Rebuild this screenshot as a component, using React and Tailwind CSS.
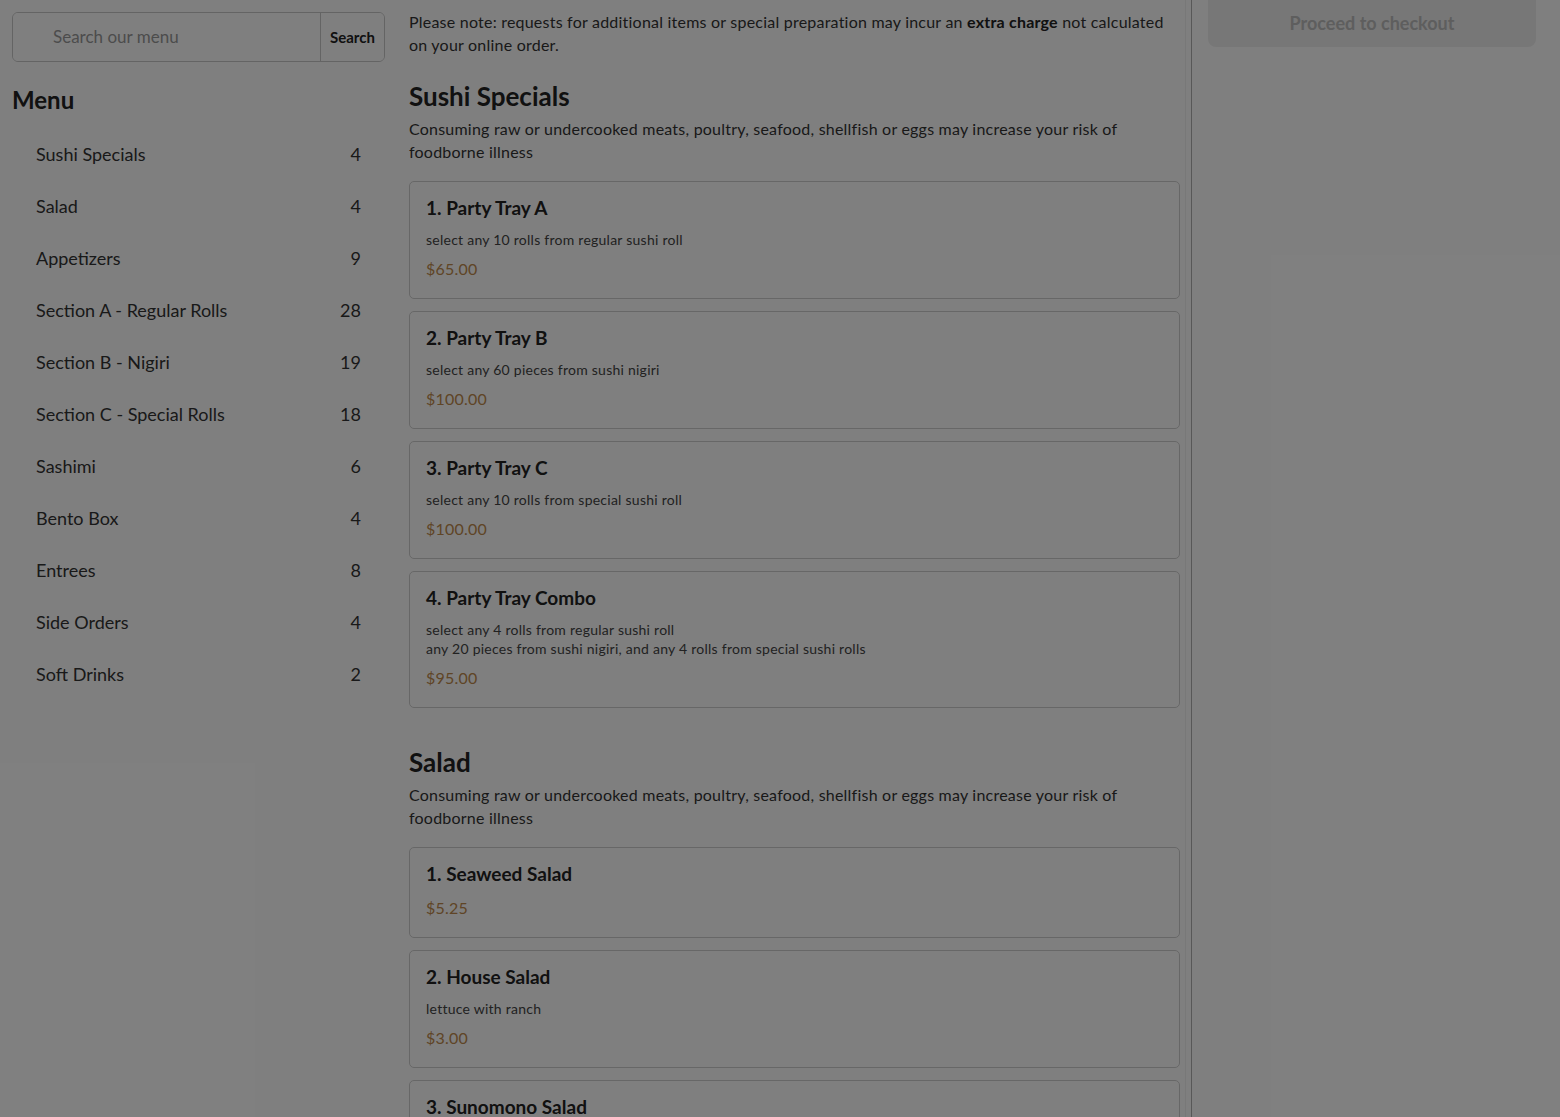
import React from 'react';

const categories = [
  ['Sushi Specials', 4],
  ['Salad', 4],
  ['Appetizers', 9],
  ['Section A - Regular Rolls', 28],
  ['Section B - Nigiri', 19],
  ['Section C - Special Rolls', 18],
  ['Sashimi', 6],
  ['Bento Box', 4],
  ['Entrees', 8],
  ['Side Orders', 4],
  ['Soft Drinks', 2],
];

const warning = 'Consuming raw or undercooked meats, poultry, seafood, shellfish or eggs may increase your risk of foodborne illness';

const sections = [
  {
    name: 'Sushi Specials',
    items: [
      { name: '1. Party Tray A', desc: ['select any 10 rolls from regular sushi roll'], price: '$65.00' },
      { name: '2. Party Tray B', desc: ['select any 60 pieces from sushi nigiri'], price: '$100.00' },
      { name: '3. Party Tray C', desc: ['select any 10 rolls from special sushi roll'], price: '$100.00' },
      {
        name: '4. Party Tray Combo',
        desc: ['select any 4 rolls from regular sushi roll', 'any 20 pieces from sushi nigiri, and any 4 rolls from special sushi rolls'],
        price: '$95.00',
      },
    ],
  },
  {
    name: 'Salad',
    items: [
      { name: '1. Seaweed Salad', desc: [], price: '$5.25' },
      { name: '2. House Salad', desc: ['lettuce with ranch'], price: '$3.00' },
      { name: '3. Sunomono Salad', desc: ['cucumber salad'], price: '$4.00' },
      { name: '4. Avocado Salad', desc: [], price: '$6.00' },
    ],
  },
];

function ItemCard({ item }) {
  return (
    <div className="rounded-[5px] border border-[#cfcfcf] bg-white px-4 pt-4 pb-[19px]">
      <h3 className="text-[19px] leading-[20px] font-bold text-[#222]">{item.name}</h3>
      {item.desc.length > 0 && (
        <div className="mt-3 text-[14px] leading-[19px] tracking-[0.25px] text-[#444]">
          {item.desc.map((line) => (
            <p key={line}>{line}</p>
          ))}
        </div>
      )}
      <p className={`${item.desc.length > 0 ? 'mt-[10px]' : 'mt-[14px]'} text-[16px] leading-[20px] tracking-[0.2px] text-[#c08a4c]`}>
        {item.price}
      </p>
    </div>
  );
}

export default function App() {
  return (
    <div className="relative h-[1117px] overflow-hidden bg-white font-['Lato','Open_Sans',sans-serif] text-[#333]">
      <div className="flex h-full">
        <aside className="w-[397px] shrink-0 p-3">
          <div className="flex h-[50px] overflow-hidden rounded-md border border-[#c8c8c8]">
            <input
              placeholder="Search our menu"
              className="min-w-0 flex-1 bg-white pl-10 text-[17px] text-[#333] outline-none placeholder:text-[#999]"
            />
            <button className="w-[64px] border-l border-[#c8c8c8] bg-white text-[15px] font-bold text-[#222]">Search</button>
          </div>
          <h2 className="mt-[26px] text-[24px] leading-[24px] font-bold text-[#222]">Menu</h2>
          <ul className="mt-4">
            {categories.map(([name, count]) => (
              <li key={name} className="flex h-[52px] items-center justify-between px-6 text-[18px] text-[#333]">
                <span>{name}</span>
                <span>{count}</span>
              </li>
            ))}
          </ul>
        </aside>

        <main className="ml-3 w-[771px] shrink-0 pt-[10px]">
          <p className="text-[16px] leading-[23px] tracking-[0.22px] text-[#333]">
            Please note: requests for additional items or special preparation may incur an <b className="text-[#222]">extra charge</b> not calculated on your online order.
          </p>
          {sections.map((section, index) => (
            <section key={section.name} className={index === 0 ? 'mt-[24px]' : 'mt-[38px]'}>
              <h2 className="text-[26px] leading-[32px] font-bold text-[#222]">{section.name}</h2>
              <p className="mt-[5px] text-[16px] leading-[23px] tracking-[0.22px] text-[#333]">{warning}</p>
              <div className="mt-[18px] flex flex-col gap-3">
                {section.items.map((item) => (
                  <ItemCard key={item.name} item={item} />
                ))}
              </div>
            </section>
          ))}
        </main>

        <div className="ml-[5px] w-px bg-[#f0f0f0]" />
        <div className="ml-[5px] w-px bg-[#b0b0b0]" />

        <aside className="flex-1 pl-4 pr-6">
          <button className="h-[47px] w-full rounded-b-lg bg-[#efefef] text-[18px] font-bold text-[#bcbcbc]">
            Proceed to checkout
          </button>
        </aside>
      </div>

      <div className="absolute inset-0 bg-black/50" />
    </div>
  );
}
